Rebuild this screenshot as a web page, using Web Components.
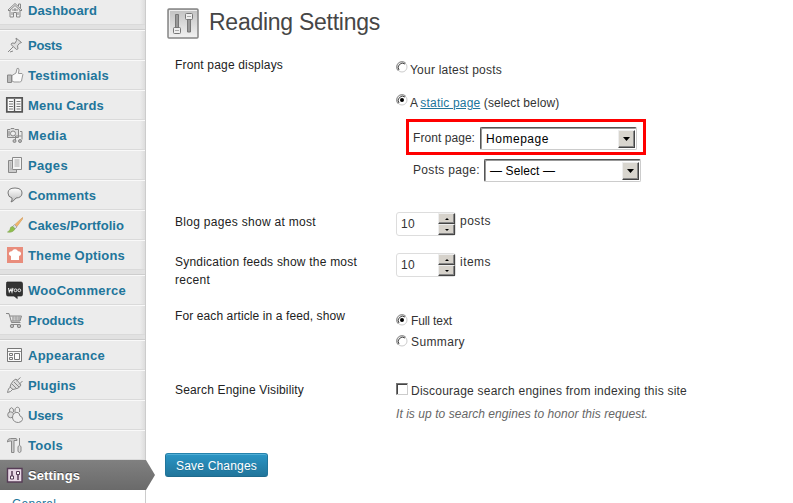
<!DOCTYPE html>
<html lang="en"><head><meta charset="utf-8"><title>Reading Settings</title>
<style>
html,body{margin:0;height:100%;overflow:hidden;background:#fff}
body{font:12px/18px "Liberation Sans",Arial,sans-serif;color:#333}
</style></head><body>
<settings-page></settings-page>
<script>
const define = (name, html, setup) => customElements.define(name, class extends HTMLElement {
  connectedCallback() {
    if (this.shadowRoot) return;
    const root = this.attachShadow({mode: 'open'});
    const t = document.createElement('template');
    t.innerHTML = typeof html === 'function' ? html(this) : html;
    root.append(t.content.cloneNode(true));
    if (setup) setup(this, root);
  }
});

// Text tracked out evenly to a given advance width.
const pen = document.createElement('canvas').getContext('2d');
define('tracked-text', '<style>:host{display:inline-block;white-space:pre;flex:none}</style><slot></slot>', el => {
  const s = getComputedStyle(el), text = el.textContent, w = +el.getAttribute('w');
  pen.font = `${s.fontStyle} ${s.fontWeight} ${s.fontSize} "Liberation Sans"`;
  el.style.letterSpacing = ((w - pen.measureText(text).width) / text.length).toFixed(3) + 'px';
});

const ICONS = {
 home:'<path d="M1 8 8 1.5 15 8l-1 1-6-5.5L2 9zM3 8v7h3.5v-4.500h3V15H13V8M11.500 4V2h2v4" fill="#eee"/><path d="M5 8h6M8 6v3M5 10v3M11 10v3"/>',
 pin:'<path d="m9 1 5.500 4.500-2 .8-2 2.500.5 3-1.500.7L4 7.500 5 6l3 .3L9.500 3.500z" fill="#ddd"/><path d="M6 10 1 15M3 15l3-1"/>',
 thumb:'<path d="M5 8.500 9 6l1-4.500q2-1 2 1.500l-.6 3.500H15q1.500 1 .5 2.500l-1 5q-.5 1-2 1H7l-2-1z" fill="#fafafa" stroke="#999"/><path d="M.5 8h4v7.500h-4z" fill="#bbb"/>',
 menu:'<path d="M-.2.800h15.400v14H-.2z" fill="#fafafa" stroke="#555" stroke-width="1.700"/><path d="M7.500 2v12" stroke="#555" stroke-width="1.300"/><path d="M2 4.500h4M2 7h4M2 9.500h4M2 12h4M9.500 4.500h4M9.500 7h4M9.500 9.500h4M9.500 12h4" stroke="#777"/>',
 media:'<path d="M.5 2.500H3l1-1h3l1 1h3.500v8H.5z" fill="#ddd"/><circle cx="6" cy="6.500" r="2.500" fill="#eee"/><path d="M2 4v5M13 4.500h2v8M8.500 13.500V9h6"/><circle cx="7.500" cy="14" r="1.500" fill="#bbb"/><circle cx="13" cy="14" r="1.500" fill="#bbb"/>',
 pages:'<path d="M5 3.500H1.500v12h8V13" fill="#ccc"/><path d="M5.500.5h9v12h-9z" fill="#f5f5f5"/><path d="M7.500 3h5M7.500 5h5M7.500 7h5M7.500 9h5M3 6h1M3 8h1M3 10h1M3 12h3" stroke="#aaa"/>',
 chat:'<path d="M8 1q7 .2 7 5t-6 5q-2 3-5 4 1.500-2 1-4Q1 10 1 6q0-5 7-5z" fill="url(#g)" stroke="#777"/>',
 brush:'<path d="m15.500.5-8 7.500 2 2L15.500 2z" fill="#f3b56a" stroke="#d7a46a" stroke-width=".8"/><path d="m7.500 7.500-2 2 2.500 2.500 2-2z" fill="#ddd" stroke="#999" stroke-width=".7"/><path d="M6 9.500q-3 0-3 3-1 2-2.500 2.500 5 1 7.500-3z" fill="#8fbf4a" stroke="#86a95a" stroke-width=".7"/>',
 chef:'<path d="M0 0h16v16H0z" fill="#e98d7c" stroke="none"/><path d="M4 13V9Q1.500 8.500 2 6q.6-2 3-1.700Q6 2 8 2.300q2-.3 3 2 2.500-.3 3 1.700.5 2.500-2 3v4z" fill="#fff" stroke="none"/>',
 woo:'<path d="M0 0h14q1.500 0 1.500 1.500v11q0 1.500-1.500 1.500h-4l.3 2.500L7 14H1q-1.500 0-1.500-1.500v-11Q-.5 0 0 0z" fill="#333" stroke="#222" stroke-width=".7"/><path d="m1.500 6 .8 4L4 7l1 3 1-4" stroke="#eee" stroke-width="1.100"/><circle cx="8.500" cy="8.300" r="1.400" stroke="#eee"/><circle cx="12.300" cy="8.300" r="1.400" stroke="#eee"/>',
 cart:'<path d="M-1 1.500h3l2.500 9h9M2.500 4h12l-1.500 5H4" fill="#ddd"/><path d="M5 6h9M5 8h8M6 4v5M9 4v5M12 4v5" stroke="#999" stroke-width=".8"/><path d="M4 12.500h9"/><circle cx="5" cy="14" r="1.700" fill="#bbb"/><circle cx="12" cy="14" r="1.700" fill="#bbb"/>',
 layout:'<path d="M.5 1.500h14v13H.5z" fill="#fafafa" stroke="#777"/><path d="M1 4.500h13" /><path d="M2.500 6.500h3v2h-3zM2.500 10.500h3v2h-3zM7.500 6.500h5v6h-5z" stroke="#777"/>',
 plug:'<path d="M4 7q2-4 5-5l5 6q-2 4-6 4l-2 .5L3 10z" fill="#ddd"/><path d="m9.500 4 4-3.500M12 7.500 15.500 4M4 10q-3 1-3 3.500L.5 15.500l3-1L6 12M5 7l5 5M7 5l5 5"/>',
 users:'<path d="M2.500 5q-.5-4 2-4.300Q7 1 6.500 5M8 5q-.5-4.500 2.500-4.800Q13.300.5 12.500 5" fill="#eee"/><ellipse cx="3.700" cy="7.800" rx="3" ry="3" fill="#ddd"/><path d="M5.500 11q0-5.500 4.500-5.700 2.500 0 3 3.700 3 1 2.500 3.500-.5 2.500-4 3-5 0-6-4.500z" fill="#eee"/>',
 tools:'<path d="M.5 4q.5-2.500 3-2.500H9q1 0 1 2H7v12H4.500V4H3Q2 4 .5 5z" fill="#ccc"/><path d="M12.500 1v7M11 9.500q1.500-2 3 0v5q-1.500 2-3 0z" fill="#ddd"/>',
 settings:'<path d="M.5 1.500h14.500v13.500H.5z" fill="#e8d8e6" stroke="#563c56" stroke-width="1.400"/><path d="M5 4v6M11 7v6" stroke="#563c56" stroke-width="1.500"/><path d="M3.500 9h3v3h-3zM9.500 4.500h3v3h-3z" fill="#fff" stroke="#563c56"/>'
};
define('menu-icon', el => `<style>:host{display:block;flex:none;width:16px;height:16px}svg{display:block;overflow:visible}</style>
<svg width="16" height="16" viewBox="0 0 16 16" fill="none" stroke="#888"><defs><linearGradient id="g" x2="0" y2="1"><stop stop-color="#fff"/><stop offset="1" stop-color="#bbb"/></linearGradient></defs>${ICONS[el.getAttribute('name')]}</svg>`);

define('menu-item', el => `<style>
:host{display:flex;box-sizing:border-box;height:30px;padding-left:7px;gap:5px;align-items:center;font:bold 13px/28px "Liberation Sans",sans-serif;color:#21759b;border-top:1px solid #f9f9f9;border-bottom:1px solid #dadada}
:host([current]){width:155px;background:linear-gradient(#808080,#6a6a6a);color:#fff;border:0;clip-path:polygon(0 0,146px 0,155px 50%,146px 100%,0 100%);text-shadow:0 -1px #444}
tracked-text{padding-top:2px}
</style><menu-icon name="${el.getAttribute('icon')}"></menu-icon><tracked-text w="${el.getAttribute('w')}">${el.getAttribute('label')}</tracked-text>`);
define('menu-gap','<style>:host{display:block;height:5px;box-sizing:border-box;background:#e1e1e1;border-bottom:1px solid #cdcdcd}</style>');

define('side-menu', `<style>
:host{display:block;width:146px;flex:none;height:503px}
nav{box-sizing:border-box;height:495px;margin-top:-5px;background:linear-gradient(90deg,transparent 140px,#ddd 145px),#ececec;border-right:1px solid #ccc}
.sub{height:30px;box-sizing:border-box;padding:5px 0 0 12px;font-size:12px;color:#21759b;background:#fff;border-right:1px solid #ccc}
</style><nav>
<menu-item icon="home" label="Dashboard" w="69"></menu-item><menu-gap></menu-gap>
<menu-item icon="pin" label="Posts" w="34"></menu-item>
<menu-item icon="thumb" label="Testimonials" w="81"></menu-item>
<menu-item icon="menu" label="Menu Cards" w="76"></menu-item>
<menu-item icon="media" label="Media" w="39"></menu-item>
<menu-item icon="pages" label="Pages" w="40"></menu-item>
<menu-item icon="chat" label="Comments" w="68"></menu-item>
<menu-item icon="brush" label="Cakes/Portfolio" w="96"></menu-item>
<menu-item icon="chef" label="Theme Options" w="97"></menu-item><menu-gap></menu-gap>
<menu-item icon="woo" label="WooCommerce" w="98"></menu-item>
<menu-item icon="cart" label="Products" w="56"></menu-item><menu-gap></menu-gap>
<menu-item icon="layout" label="Appearance" w="77"></menu-item>
<menu-item icon="plug" label="Plugins" w="48"></menu-item>
<menu-item icon="users" label="Users" w="35"></menu-item>
<menu-item icon="tools" label="Tools" w="35"></menu-item>
<menu-item icon="settings" label="Settings" w="52" current></menu-item>
</nav><div class="sub"><tracked-text w="44">General</tracked-text></div>`);

define('radio-mark', el => `<style>:host{display:block;flex:none;width:12px;height:12px}svg{display:block}</style>
<svg width="12" height="12" fill="none"><circle cx="6" cy="6" r="5" fill="#fff" stroke="#ccc"/><path d="M2.200 9.800A5.300 5.300 0 0 1 9.800 2.200" stroke="#888"/><path d="M3 9A4.300 4.300 0 0 1 9 3" stroke="#444"/>${el.hasAttribute('checked')?'<circle cx="6" cy="6" r="2" fill="#000"/>':''}</svg>`);
define('check-mark','<style>:host{display:block;flex:none;box-sizing:border-box;width:12px;height:12px;background:#fff;border:1px solid;border-color:#777 #ccc #ccc #777;box-shadow:inset 1px 1px #444}</style>');

define('select-box', `<style>
:host{display:flex;flex:none;box-sizing:border-box;width:157px;height:23px;border:1px solid;border-color:#555 #ccc #ccc #555;box-shadow:inset 1px 1px #999;border-radius:2px;background:#fff;color:#000;padding:2px 1px 2px 5px;justify-content:space-between}
b{box-sizing:border-box;width:17px;height:18px;background:#d8d5ce;border:1px solid;border-color:#eee #444 #444 #eee;box-shadow:inset -1px -1px #888;display:grid;place-items:center}
svg{display:block}
</style><span><slot></slot></span><b><svg width="7" height="4"><path d="M0 0h7L3.500 4z"/></svg></b>`);

define('number-box', `<style>
:host{display:flex;flex:none;box-sizing:border-box;width:60px;height:24px;border:1px solid #ddd;border-radius:3px;justify-content:space-between;padding-left:4px}
span{padding-top:2px}div{width:17px;display:grid;grid-template-rows:11px 11px}
b{background:#d6d2cb;border:1px solid;border-color:#eee #444 #444 #eee;box-shadow:inset -1px -1px #888;display:grid;place-items:center;box-sizing:border-box}
svg{display:block}
</style><span><slot></slot></span><div><b><svg width="4" height="2"><path d="M0 2h4L2 0z"/></svg></b><b><svg width="4" height="2"><path d="M0 0h4L2 2z"/></svg></b></div>`);

define('field-row', `<style>
:host{display:grid;grid-template-columns:220px 1fr;padding-left:29px;box-sizing:border-box}
.label{color:#222}.ctl{padding-left:1px}
</style><div class="label"><slot name="label"></slot></div><div class="ctl"><slot></slot></div>`);

define('save-button', `<style>:host{display:block;box-sizing:border-box;width:103px;height:24px;margin-left:19px;padding:3px 0 0 10px;border:1px solid #21759b;border-top-color:#2583ad;border-bottom-color:#1e6a8d;border-radius:3px;background:linear-gradient(#2a95c5,#21759b);box-shadow:inset 0 1px rgba(120,200,230,.5);color:#fff;text-shadow:0 1px rgba(0,0,0,.1)}</style><slot></slot>`);

define('settings-page', `<style>
:host{display:flex;width:793px;height:503px;overflow:hidden}
main{flex:1;display:flex;flex-direction:column}
header{height:56px;box-sizing:border-box;display:flex;padding:8px 0 0 21px;gap:9px;color:#464646}
h1{font:23px/28px "Liberation Sans",sans-serif;margin:0}
field-row{flex:none}
.line{display:flex;height:18px;align-items:flex-start}
.line tracked-text{line-height:18px}
.box{box-sizing:border-box;width:240px;height:36px;border:3px solid #f00;margin:6px 0 0 10px;padding:5px 0 0 4px;display:flex}
.r{gap:3px}a{color:#21759b;text-decoration:underline}
i{color:#666}
</style><side-menu></side-menu><main>
<header><svg width="33" height="32" fill="none"><defs><linearGradient id="h" x2="0" y2="1"><stop stop-color="#c0c0c0"/><stop offset="1" stop-color="#f2f2f2"/></linearGradient></defs><rect x="1" y="1" width="30" height="29" rx="1" fill="url(#h)" stroke="#858585" stroke-width="1.500"/><path d="M2.500 28V2.500H30" stroke="#eee"/><path d="M8.500 6.500h3V20h-3zM20.500 10h3v14h-3z" fill="#999" stroke="#777"/><rect x="6.500" y="19.500" width="7" height="6" rx="1" fill="#eee" stroke="#777"/><rect x="18.500" y="5.500" width="7" height="6" rx="1" fill="#eee" stroke="#777"/><path d="M8 22.500h4M20 8.500h4" stroke="#aaa"/></svg><h1><tracked-text w="171">Reading Settings</tracked-text></h1></header>
<field-row style="height:157px"><tracked-text slot="label" w="108">Front page displays</tracked-text>
 <div class="line r" style="margin-top:5px"><radio-mark></radio-mark><tracked-text w="92" style="margin-left:-1px">Your latest posts</tracked-text></div>
 <div class="line r" style="margin-top:15px"><radio-mark checked></radio-mark><span style="margin-left:-1px;display:flex"><tracked-text w="11">A </tracked-text><a href="#"><tracked-text w="60" style="text-decoration:underline">static page</tracked-text></a><tracked-text w="79"> (select below)</tracked-text></span></div>
 <div class="box" style="margin-top:7px"><tracked-text w="62" style="margin-top:2px;width:67px">Front page:</tracked-text><select-box><tracked-text w="63">Homepage</tracked-text></select-box></div>
 <div style="display:flex;margin:4px 0 0 17px"><tracked-text w="67" style="margin-top:2px;width:71px">Posts page:</tracked-text><select-box><tracked-text w="65">— Select —</tracked-text></select-box></div>
</field-row>
<field-row style="height:40px"><tracked-text slot="label" w="141">Blog pages show at most</tracked-text>
 <div style="display:flex;gap:4px;margin-top:-1px"><number-box><tracked-text w="14">10</tracked-text></number-box><tracked-text w="31">posts</tracked-text></div></field-row>
<field-row style="height:54px"><div slot="label"><tracked-text w="182">Syndication feeds show the most</tracked-text><br><tracked-text w="35">recent</tracked-text></div>
 <div style="display:flex;gap:4px"><number-box><tracked-text w="14">10</tracked-text></number-box><tracked-text w="31">items</tracked-text></div></field-row>
<field-row style="height:74px"><tracked-text slot="label" w="170">For each article in a feed, show</tracked-text>
 <div class="line r" style="margin-top:7px"><radio-mark checked></radio-mark><tracked-text w="41" style="margin-top:-2px">Full text</tracked-text></div>
 <div class="line r" style="margin-top:3px"><radio-mark></radio-mark><tracked-text w="54" style="margin-top:-2px">Summary</tracked-text></div></field-row>
<field-row style="height:72px"><tracked-text slot="label" w="129">Search Engine Visibility</tracked-text>
 <div class="line r" style="margin-top:1px"><check-mark style="margin-top:1px"></check-mark><tracked-text w="276">Discourage search engines from indexing this site</tracked-text></div>
 <i style="display:block;margin-top:5px"><tracked-text w="252">It is up to search engines to honor this request.</tracked-text></i></field-row>
<save-button><tracked-text w="81">Save Changes</tracked-text></save-button>
</main>`);
</script></body></html>
